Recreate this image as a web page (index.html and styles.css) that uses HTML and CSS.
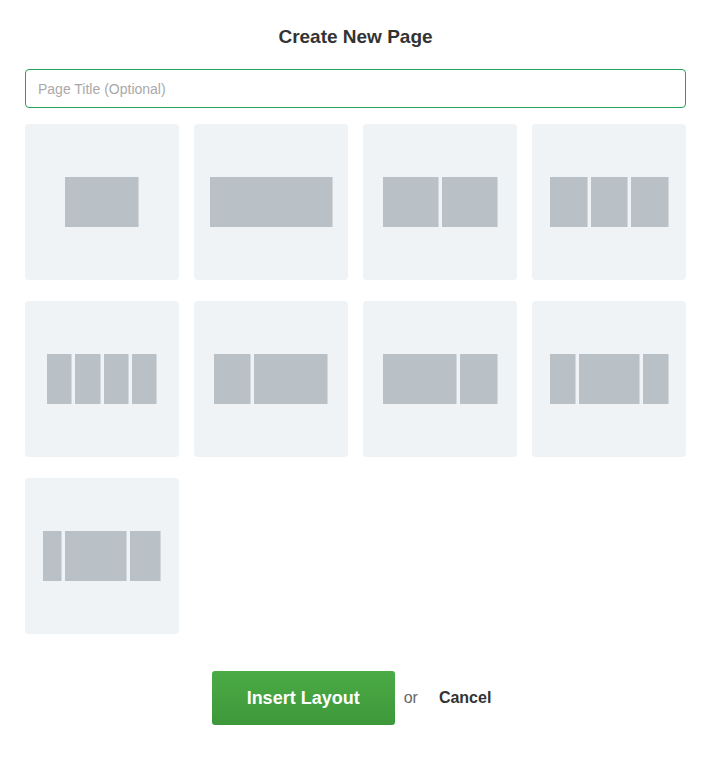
FILE: index.html
```html
<!DOCTYPE html>
<html lang="en">
<head>
<meta charset="utf-8">
<title>Create New Page</title>
<link rel="stylesheet" href="styles.css">
</head>
<body>
<div class="dialog">
  <h1 class="title">Create New Page</h1>
  <input class="page-title" type="text" placeholder="Page Title (Optional)" autofocus>
  <div class="layouts">
    <div class="card"><span class="col" style="width:73px"></span></div>
    <div class="card"><span class="col" style="width:122px"></span></div>
    <div class="card"><span class="col" style="width:55px"></span><span class="col" style="width:55px"></span></div>
    <div class="card"><span class="col" style="width:37px"></span><span class="col" style="width:36px"></span><span class="col" style="width:37px"></span></div>
    <div class="card"><span class="col" style="width:24px"></span><span class="col" style="width:25px"></span><span class="col" style="width:24px"></span><span class="col" style="width:24px"></span></div>
    <div class="card"><span class="col" style="width:36px"></span><span class="col" style="width:73px"></span></div>
    <div class="card"><span class="col" style="width:73px"></span><span class="col" style="width:37px"></span></div>
    <div class="card"><span class="col" style="width:25px"></span><span class="col" style="width:60px"></span><span class="col" style="width:25px"></span></div>
    <div class="card"><span class="col" style="width:18px"></span><span class="col" style="width:61px"></span><span class="col" style="width:30px"></span></div>
  </div>
  <div class="actions">
    <button class="btn-insert" type="button">Insert Layout</button>
    <span class="or">or</span>
    <a class="cancel" href="#">Cancel</a>
  </div>
</div>
</body>
</html>
```
FILE: styles.css
```css
html, body {
  margin: 0;
  padding: 0;
  background: #ffffff;
}

body {
  font-family: "Liberation Sans", Arial, sans-serif;
  color: #333333;
}

.dialog {
  padding: 24px 26px 0 25px;
}

.title {
  margin: 0;
  font-size: 19px;
  line-height: 26px;
  font-weight: bold;
  text-align: center;
  color: #333333;
}

.page-title {
  display: block;
  box-sizing: border-box;
  width: 661px;
  height: 39px;
  margin: 19px 0 0 0;
  padding: 0 12px;
  border: 1px solid #25a25a;
  border-radius: 4px;
  font-family: "Liberation Sans", Arial, sans-serif;
  font-size: 14px;
  color: #333333;
  outline: none;
  caret-color: #666666;
}

.page-title::placeholder {
  color: #a9a9a9;
}

.layouts {
  display: grid;
  grid-template-columns: repeat(4, 154px);
  grid-auto-rows: 156px;
  column-gap: 15px;
  row-gap: 21px;
  margin-top: 16px;
}

.card {
  display: flex;
  align-items: center;
  justify-content: center;
  gap: 4px;
  padding-right: 1px;
  background: #eff3f6;
  border-radius: 4px;
}

.col {
  display: block;
  height: 50px;
  background: #b9c1c7;
  box-shadow: 1px 0 0 #d2d8dc;
}

.actions {
  display: flex;
  align-items: center;
  justify-content: center;
  margin-top: 37px;
  padding-left: 4px;
}

.btn-insert {
  width: 183px;
  height: 54px;
  border: none;
  border-radius: 3px;
  background: linear-gradient(#4bab45, #3e983a);
  color: #ffffff;
  font-family: "Liberation Sans", Arial, sans-serif;
  font-size: 18px;
  font-weight: bold;
  cursor: pointer;
}

.or {
  margin-left: 9px;
  font-size: 16px;
  color: #666666;
}

.cancel {
  margin-left: 9px;
  padding: 0 12px;
  font-size: 16px;
  font-weight: bold;
  color: #333333;
  text-decoration: none;
}
```
